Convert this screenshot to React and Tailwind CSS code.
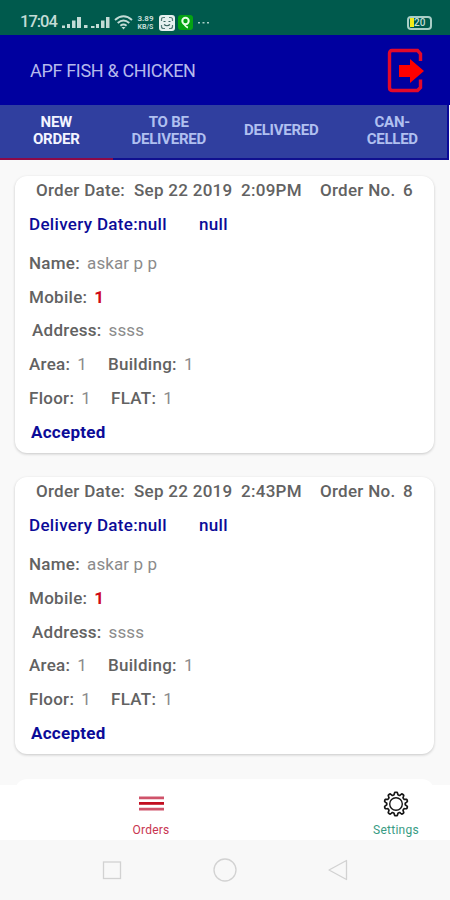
import clsx from 'clsx';

const orders = [
  { id: 6, date: 'Sep 22 2019', time: '2:09PM', name: 'askar p p', address: 'ssss' },
  { id: 8, date: 'Sep 22 2019', time: '2:43PM', name: 'askar p p', address: 'ssss' },
];

const tabs = [
  { lines: ['NEW', 'ORDER'], active: true },
  { lines: ['TO BE', 'DELIVERED'] },
  { lines: ['DELIVERED'] },
  { lines: ['CAN-', 'CELLED'] },
];

// ten rounded teeth around a 13,13 centre
const gearPath = Array.from({ length: 120 }, (_, i) => {
  const angle = (i / 120) * Math.PI * 2;
  const r = 10.5 + 1.3 * Math.tanh(2.2 * Math.cos(10 * angle));
  const x = 13 + r * Math.sin(angle);
  const y = 13 - r * Math.cos(angle);
  return `${i ? 'L' : 'M'}${x.toFixed(2)} ${y.toFixed(2)}`;
}).join('') + 'z';

function StatusBar() {
  return (
    <div className="flex h-[35px] shrink-0 items-center bg-[#005a4d] pt-[10px] pr-[18px] pl-[20px] text-[#c3dcd6]">
      <span className="w-[41px] text-[16.500px] leading-none font-medium tracking-[-1px]">17:04</span>
      <svg width="21" height="14" viewBox="0 0 21 14" fill="#c3dcd6">
        <path d="M1 9.500h3V12H1zM6 8h3v4H6zM11 4.500h3.500V12H11zM16 1h4v11h-4z" />
      </svg>
      <svg className="ml-[2px]" width="27" height="14" viewBox="0 0 27 14" fill="#c3dcd6">
        <path d="M0 9h3.500v3H0zM7 10h3.500v2H7zM12 8h3v4h-3zM17 4.500h3.500V12H17zM22 1h3.500v11H22z" />
      </svg>
      <svg className="ml-[3px]" width="19" height="15" viewBox="0 0 19 15" fill="none" stroke="#c3dcd6" strokeWidth="1.9">
        <path d="M1 5q8.500-7.500 17 0M3.700 8q5.800-5 11.600 0M6.400 10.700q3.100-2.500 6.200 0" />
        <path d="M7.500 12h4l-2 2.500z" fill="#c3dcd6" stroke="none" />
      </svg>
      <span className="ml-[3px] flex w-[19px] flex-col items-center text-[8px] leading-[8px] font-bold">
        <span>3.89</span>
        <span className="text-[7px] leading-[8px]">KB/S</span>
      </span>
      <svg className="ml-[4px]" width="16" height="16" viewBox="0 0 16 16" fill="none">
        <rect width="16" height="16" rx="3" fill="#e6f0ef" />
        <path d="M6 2.500H4.500q-2 0-2 2V6M10 2.500h1.500q2 0 2 2V6M2.500 10v1.500q0 2 2 2H6M10 13.500h1.500q2 0 2-2V10" stroke="#557b78" strokeWidth="1.200" />
        <path d="M4.500 6.500h2M9.500 6.500h2M5 9.500q3 2.500 6 0" stroke="#35605c" strokeWidth="1.200" />
      </svg>
      <svg className="ml-[3px]" width="15" height="15" viewBox="0 0 15 15" fill="none">
        <rect width="15" height="15" rx="3" fill="#05a313" />
        <circle cx="7.500" cy="6" r="3.200" stroke="#e4ffe4" strokeWidth="2" />
        <path d="M6 8.500q1.500 3.500 4 4" stroke="#e4ffe4" strokeWidth="1.800" />
      </svg>
      <svg className="ml-[5px]" width="12" height="4" viewBox="0 0 12 4" fill="#a9cec7">
        <path d="M0 1h2v1.500H0zM4.500 1h2v1.500h-2zM9 1h2v1.500H9z" />
      </svg>
      <div className="ml-auto flex h-[14px] w-[25px] items-center rounded-[4px] border-2 border-[#a9cec7] pl-px">
        <span className="h-[9px] w-[4px] bg-[#f3ea16]" />
        <span className="text-[10px] leading-none font-medium">20</span>
      </div>
    </div>
  );
}

function Header() {
  return (
    <header className="flex h-[70px] shrink-0 items-center justify-between bg-[#00009f] pt-px pr-[24px] pl-[30px]">
      <h1 className="text-[18px] tracking-[-0.330px] text-[#b5b9ec]">APF FISH &amp; CHICKEN</h1>
      <svg width="39" height="46" viewBox="0 0 39 46" fill="none">
        <path d="M33.500 13V6L30.500 2.500H5Q2.500 2.500 2.500 5.500v34q0 3 3 3h25l3-3v-8" stroke="#e3092a" strokeWidth="3.400" />
        <path d="M12 17h11v-6l14 12-14 12v-6H12z" fill="#ff0000" />
      </svg>
    </header>
  );
}

function Tabs() {
  return (
    <nav className="flex h-[55px] w-[449px] shrink-0 border-r-2 border-[#090998] bg-[#303f9f]">
      {tabs.map((tab) => (
        <div
          key={tab.lines.join(' ')}
          className={clsx(
            'flex w-[112.500px] shrink-0 flex-col items-center justify-center border-b-2 pb-[2px] text-[15px] leading-[17px] font-bold tracking-[-0.250px] last:w-[109.500px]',
            tab.active ? 'border-[#8c0a48] text-[#f3f4ff]' : 'border-[#10108f] text-[#b0c0f0]'
          )}
        >
          {tab.lines.map((line) => (
            <span key={line}>{line}</span>
          ))}
        </div>
      ))}
    </nav>
  );
}

function Field({ label, value, className }) {
  return (
    <div className={clsx('flex gap-[7px]', className)}>
      <span>{label}</span>
      <span className="font-normal tracking-[0.100px] text-[#8b8b8b]">{value}</span>
    </div>
  );
}

function OrderCard({ order }) {
  return (
    <article className="mb-[24.300px] h-[277px] w-[419px] shrink-0 rounded-[12px] bg-white pl-[14px] text-[17px] leading-none font-medium tracking-[0.280px] whitespace-nowrap text-[#626262] shadow-[0_1px_3px_rgba(0,0,0,0.2)]">
      <div className="flex h-[28px] items-center pl-[7px]">
        <span className="w-[98px]">Order Date:</span>
        <span className="w-[107px]">{order.date}</span>
        <span className="w-[79px]">{order.time}</span>
        <span className="w-[83px]">Order No.</span>
        <span>{order.id}</span>
      </div>
      <div className="mb-[1.500px] flex h-[41px] items-center tracking-[0.320px] text-[#0b0b98]">
        <span className="w-[170px]">Delivery Date:null</span>
        <span>null</span>
      </div>
      <div className="grid auto-rows-[33.750px] items-center">
        <Field label="Name:" value={order.name} />
        <div className="flex gap-[7px]">
          <span>Mobile:</span>
          <span className="font-bold text-[#cf0a18]">1</span>
        </div>
        <Field label="Address:" value={order.address} className="pl-[3px]" />
        <div className="flex">
          <Field label="Area:" value="1" className="w-[79px]" />
          <Field label="Building:" value="1" />
        </div>
        <div className="flex">
          <Field label="Floor:" value="1" className="w-[82px]" />
          <Field label="FLAT:" value="1" />
        </div>
        <span className="pl-[2px] font-bold text-[#0b0b98]">Accepted</span>
      </div>
    </article>
  );
}

function BottomNav() {
  return (
    <nav className="flex h-[55px] shrink-0 justify-between bg-white pr-[24px] pl-[121px] text-[12px] leading-none">
      <div className="flex w-[60px] flex-col items-center pt-[11px] text-[#c83450]">
        <svg width="25" height="15" viewBox="0 0 25 15">
          <path d="M0 .5h25v2.800H0zM0 11.800h25v2.700H0z" fill="#cf536a" />
          <path d="M0 6h25v2.800H0z" fill="#c20e20" />
        </svg>
        <span className="mt-[13px] tracking-[0.200px]">Orders</span>
      </div>
      <div className="flex w-[60px] flex-col items-center pt-[6px] text-[#389b83]">
        <svg width="26" height="26" viewBox="0 0 26 26" fill="none" stroke="#161616">
          <path d={gearPath} strokeWidth="1.700" />
          <circle cx="13" cy="13" r="6.300" strokeWidth="1.400" />
        </svg>
        <span className="mt-[7px] tracking-[0.250px]">Settings</span>
      </div>
    </nav>
  );
}

function SystemNav() {
  return (
    <div className="flex h-[60px] shrink-0 items-center justify-center gap-[90px] bg-[#f8f8f8]">
      <svg width="24" height="24" viewBox="0 0 24 24" fill="none" stroke="#d2d2d2" strokeWidth="1.300">
        <rect x="4.500" y="4" width="17" height="16.500" />
      </svg>
      <svg width="24" height="24" viewBox="0 0 24 24" fill="none" stroke="#d2d2d2" strokeWidth="1.300">
        <circle cx="12" cy="12" r="11" />
      </svg>
      <svg width="24" height="24" viewBox="0 0 24 24" fill="none" stroke="#d2d2d2" strokeWidth="1.300" strokeLinejoin="round">
        <path d="M19.500 2.500v19L2 12z" />
      </svg>
    </div>
  );
}

export default function App() {
  return (
    <div className="flex h-[900px] w-[450px] flex-col overflow-hidden bg-[#f9f9f9] font-['Roboto',sans-serif]">
      <StatusBar />
      <Header />
      <Tabs />
      <main className="flex min-h-0 flex-1 flex-col overflow-hidden pt-[16px] pl-[15px]">
        {orders.map((order) => (
          <OrderCard key={order.id} order={order} />
        ))}
        <div className="h-[40px] w-[419px] shrink-0 rounded-[12px] bg-white" />
      </main>
      <BottomNav />
      <SystemNav />
    </div>
  );
}
